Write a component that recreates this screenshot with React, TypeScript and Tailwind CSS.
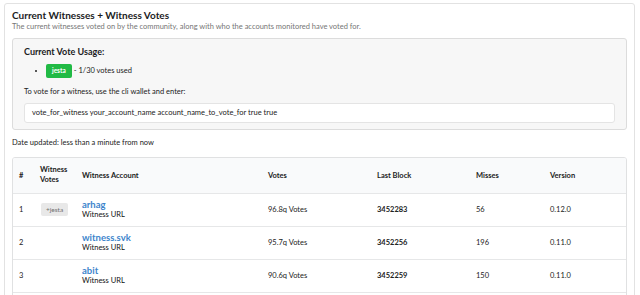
import React from "react"

// ─── Data ────────────────────────────────────────────────────────────────────

type Witness = {
  rank: number
  account: string
  votedBy: string[]
  votes: string
  lastBlock: string
  misses: number
  version: string
}

const WITNESSES: Witness[] = [
  { rank: 1, account: "arhag", votedBy: ["jesta"], votes: "96.8q Votes", lastBlock: "3452283", misses: 56, version: "0.12.0" },
  { rank: 2, account: "witness.svk", votedBy: [], votes: "95.7q Votes", lastBlock: "3452256", misses: 196, version: "0.11.0" },
  { rank: 3, account: "abit", votedBy: [], votes: "90.6q Votes", lastBlock: "3452259", misses: 150, version: "0.11.0" },
]

// ─── Row ─────────────────────────────────────────────────────────────────────

function WitnessRow({ w }: { w: Witness }) {
  return (
    <tr className="border-t border-[#e6e7e8]">
      <td className="pl-[6px] h-[33px] align-middle">{w.rank}</td>
      <td className="pl-[7px] align-middle">
        {w.votedBy.map(v => (
          <span key={v} className="inline-flex items-center h-[13px] bg-[#e8e8e8] text-[#6f6f6f] text-[6.5px] rounded-[2px] px-[5px]">
            +{v}
          </span>
        ))}
      </td>
      <td className="pl-[6px] align-middle">
        <div className="text-[9.5px] font-bold text-[#3d85cc] leading-[11px]">{w.account}</div>
        <div className="leading-[10px] text-[#111]">Witness URL</div>
      </td>
      <td className="pl-[6px] align-middle">{w.votes}</td>
      <td className="pl-[6px] align-middle font-bold">{w.lastBlock}</td>
      <td className="pl-[6px] align-middle">{w.misses}</td>
      <td className="pl-[6px] align-middle">{w.version}</td>
    </tr>
  )
}

// ─── Page ─────────────────────────────────────────────────────────────────────

export default function App() {
  return (
    <div className="w-[640px] h-[295px] overflow-hidden bg-white text-[#222] font-['Lato','Liberation_Sans',sans-serif] text-[7.5px] pt-[3px] pl-[4px]">
      <div className="w-[631px] h-[310px] border border-[#e2e2e2] rounded-[3px] px-[7px] pt-[4px]">
        <h1 className="text-[10px] font-bold leading-[14px] text-[#1b1c1d]">Current Witnesses + Witness Votes</h1>
        <p className="leading-[10px] text-[#767676]">
          The current witnesses voted on by the community, along with who the accounts monitored have voted for.
        </p>

        {/* Vote usage */}
        <div className="mt-[6px] h-[92px] bg-[#f7f7f7] border border-[#dcdcdc] rounded-[3px] px-[11px] pt-[7px]">
          <h2 className="text-[9px] font-bold leading-[12px] text-[#1b1c1d]">Current Vote Usage:</h2>
          <ul className="list-disc pl-[22px] mt-[6px]">
            <li>
              <div className="flex items-center h-[14px] gap-[2px]">
                <span className="inline-flex items-center h-[14px] bg-[#21ba45] text-white font-bold text-[6.5px] rounded-[2px] px-[6px]">jesta</span>
                <span> - 1/30 votes used</span>
              </div>
            </li>
          </ul>
          <p className="mt-[9px] leading-[10px]">To vote for a witness, use the cli wallet and enter:</p>
          <div className="mt-[6px] h-[20px] bg-white border border-[#e4e4e4] rounded-[3px] flex items-center px-[7px]">
            vote_for_witness your_account_name account_name_to_vote_for true true
          </div>
        </div>

        <p className="mt-[8px] leading-[10px]">Date updated: less than a minute from now</p>

        {/* Witness table */}
        <div className="mt-[9px] border border-[#e0e1e2] rounded-[3px] overflow-hidden">
          <table className="w-full table-fixed border-collapse text-left">
            <colgroup>
              <col className="w-[21px]" />
              <col className="w-[42px]" />
              <col className="w-[186px]" />
              <col className="w-[109px]" />
              <col className="w-[99px]" />
              <col className="w-[74px]" />
              <col />
            </colgroup>
            <thead className="bg-[#f9fafb]">
              <tr>
                <th className="pl-[6px] h-[35px] font-bold">#</th>
                <th className="pl-[6px] font-bold leading-[10px]">Witness Votes</th>
                <th className="pl-[6px] font-bold">Witness Account</th>
                <th className="pl-[6px] font-bold">Votes</th>
                <th className="pl-[6px] font-bold">Last Block</th>
                <th className="pl-[6px] font-bold">Misses</th>
                <th className="pl-[6px] font-bold">Version</th>
              </tr>
            </thead>
            <tbody>
              {WITNESSES.map(w => (
                <WitnessRow key={w.rank} w={w} />
              ))}
              <tr className="border-t border-[#e6e7e8]">
                <td className="h-[33px]" colSpan={7} />
              </tr>
            </tbody>
          </table>
        </div>
      </div>
    </div>
  )
}
